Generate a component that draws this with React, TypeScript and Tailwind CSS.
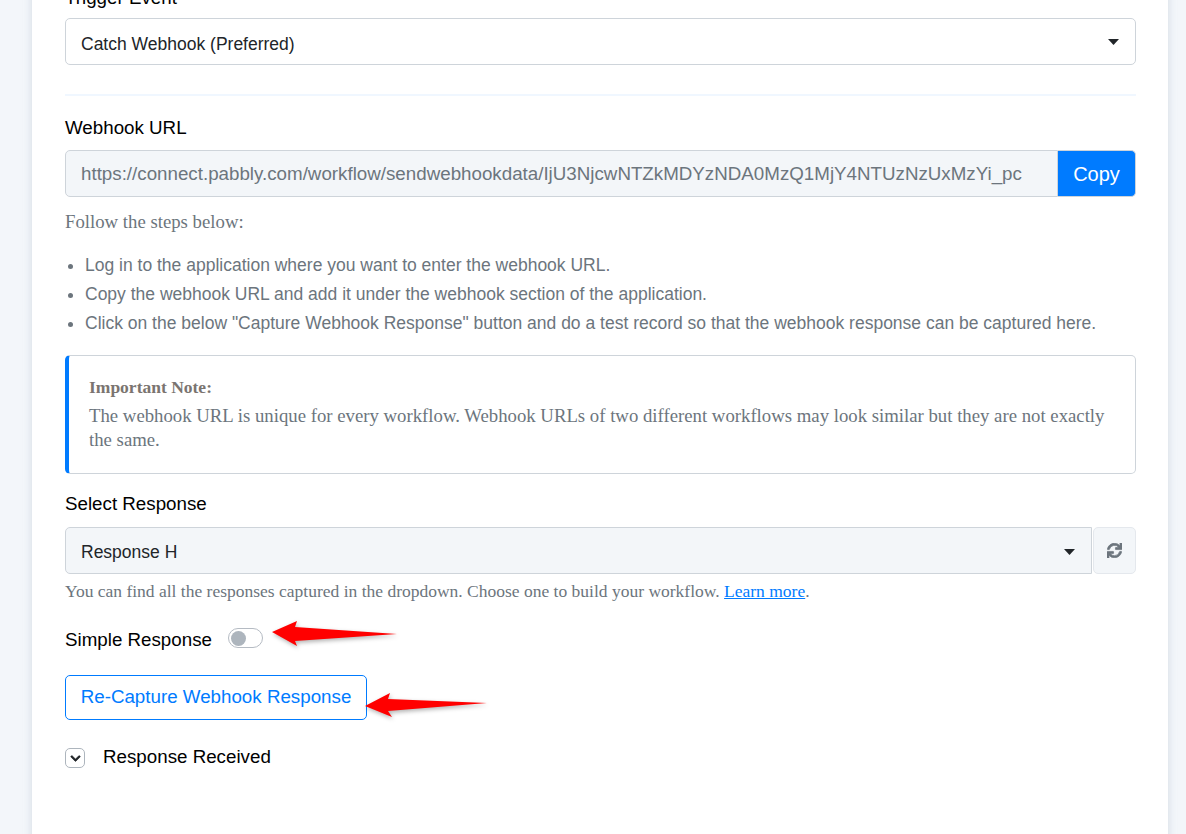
import { FaSync, FaChevronDown } from "react-icons/fa";

const sans = "font-['Liberation_Sans',Arial,sans-serif]";
const serif = "font-['Liberation_Serif','Times_New_Roman',serif]";

function Caret({ className = "" }: { className?: string }) {
  return (
    <svg width="11" height="6" viewBox="0 0 11 6" className={`shrink-0 ${className}`}>
      <path d="M0 0h11L5.5 6z" fill="#212529" />
    </svg>
  );
}

function Arrow({ points, className }: { points: string; className: string }) {
  return (
    <svg viewBox="0 0 130 30" width="130" height="30" className={className}>
      <polygon points={points} fill="#ff0000" />
    </svg>
  );
}

export default function App() {
  return (
    <div className={`h-[834px] overflow-hidden bg-[#f3f6fa] pr-[18px] pl-8 ${sans}`}>
      <div className="relative h-[860px] bg-white pr-[32px] pl-[33px] shadow-[0_0_8px_rgba(150,165,185,0.35)]">
        {/* Trigger event */}
        <div className="-mt-[14px]">
          <label className="block h-[32px] text-[18.75px] leading-[24px] text-black">Trigger Event</label>
          <div className="flex h-[47px] items-center justify-between rounded-[5px] border border-[#ced4da] bg-white pr-[16px] pl-[15px] text-[17.5px] text-[#212529]">
            <span className="pt-[6px]">Catch Webhook (Preferred)</span>
            <Caret />
          </div>
        </div>

        <div className="mt-[29px] h-[2px] bg-[#f0f7ff]" />

        {/* Webhook URL */}
        <label className="mt-[19px] block h-[35px] text-[18.75px] leading-[26px] text-black">Webhook URL</label>
        <div className="flex h-[47px]">
          <div className="flex flex-1 items-center rounded-l-[5px] border border-[#ced4da] bg-[#f3f6f9] pt-[2px] pl-[15px] text-[18.75px] text-[#6c757d]">
            https://connect.pabbly.com/workflow/sendwebhookdata/IjU3NjcwNTZkMDYzNDA0MzQ1MjY4NTUzNzUxMzYi_pc
          </div>
          <button className="w-[78px] rounded-r-[5px] border border-l-0 border-[#ced4da] bg-[#007bff] text-center text-[20px] text-white">
            Copy
          </button>
        </div>

        <p className={`mt-[13px] text-[18.75px] leading-[24px] text-[#6c757d] ${serif}`}>Follow the steps below:</p>

        <ul className="mt-[17px] list-disc pl-[20px] text-[17.5px] leading-[29px] text-[#6c757d]">
          <li>Log in to the application where you want to enter the webhook URL.</li>
          <li>Copy the webhook URL and add it under the webhook section of the application.</li>
          <li>Click on the below "Capture Webhook Response" button and do a test record so that the webhook response can be captured here.</li>
        </ul>

        {/* Note */}
        <div className={`mt-[17px] h-[119px] rounded-[5px] border border-l-[4px] border-[#ced4da] border-l-[#007bff] pt-[19px] pr-[20px] pl-[20px] text-[#6c757d] ${serif}`}>
          <div className="text-[17.5px] leading-[24px] font-bold text-[#7a7470]">Important Note:</div>
          <p className="mt-[5px] text-[18.75px] leading-[24px]">
            The webhook URL is unique for every workflow. Webhook URLs of two different workflows may look similar but they are not exactly the same.
          </p>
        </div>

        {/* Select response */}
        <label className="mt-[17px] block h-[36px] text-[18.75px] leading-[26px] text-black">Select Response</label>
        <div className="flex h-[47px]">
          <div className="flex flex-1 items-center justify-between rounded-l-[5px] border border-[#ced4da] bg-[#f3f6f9] pr-[16px] pl-[15px] text-[17.5px] text-[#212529]">
            <span className="pt-[3px]">Response H</span>
            <Caret className="mt-[2px]" />
          </div>
          <div className="ml-px flex w-[43px] items-center justify-center rounded-[5px] border border-[#e4e8ed] bg-[#f3f6f9] text-[#6c757d]">
            <FaSync size={15} stroke="currentColor" strokeWidth={24} />
          </div>
        </div>
        <p className={`mt-[5px] text-[17.5px] leading-[24px] text-[#6c757d] ${serif}`}>
          You can find all the responses captured in the dropdown. Choose one to build your workflow.{" "}
          <a className="text-[#007bff] underline">Learn more</a>.
        </p>

        {/* Simple response toggle */}
        <div className="mt-[25px] flex h-[24px] items-center text-[18.75px] text-black">
          <span>Simple Response</span>
          <span className="-mt-[4px] ml-[16px] flex h-[20px] w-[35px] items-center rounded-full border border-[#b5bbc3] bg-white pl-[2px]">
            <span className="h-[15px] w-[15px] rounded-full bg-[#adb5bd]" />
          </span>
        </div>

        <button className="mt-[23px] block h-[45px] w-[302px] rounded-[5px] border border-[#007bff] bg-white text-center text-[18.75px] text-[#007bff]">
          Re-Capture Webhook Response
        </button>

        <div className="mt-[25px] flex h-[24px] items-center text-[18.75px] text-black">
          <span className="mt-[2px] flex h-[20px] w-[20px] items-center justify-center rounded-[5px] border border-[#adb5bd] text-[#212529]">
            <FaChevronDown size={11} stroke="currentColor" strokeWidth={30} />
          </span>
          <span className="ml-[18px]">Response Received</span>
        </div>

        {/* red annotation arrows */}
        <Arrow
          points="0,14 25,3 23,9 125,16 23,23 25,28"
          className="absolute top-[632px] left-[240px] drop-shadow-[1px_2px_2px_rgba(0,0,0,0.3)]"
        />
        <Arrow
          points="0,15 25,2 23,8 122,12 23,20 27,26"
          className="absolute top-[705px] left-[333px] drop-shadow-[1px_2px_2px_rgba(0,0,0,0.3)]"
        />
      </div>
    </div>
  );
}
